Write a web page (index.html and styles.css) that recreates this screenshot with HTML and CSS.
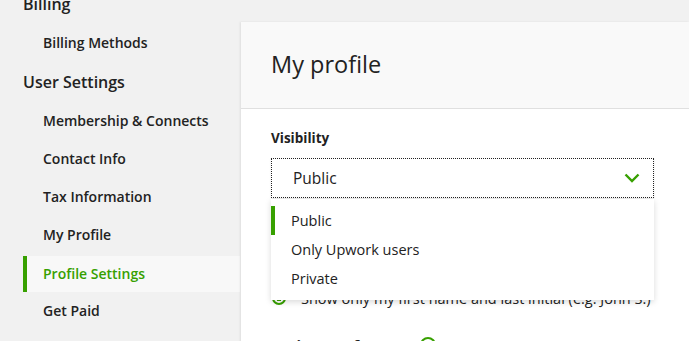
FILE: index.html
```html
<!DOCTYPE html>
<html lang="en">
<head>
  <meta charset="UTF-8" />
  <title>Profile Settings</title>
  <link rel="stylesheet" href="styles.css">
</head>
<body>
  <div class="layout">
    <nav class="sidebar">
      <div class="nav-heading">Billing</div>
      <a class="nav-item" href="#">Billing Methods</a>
      <div class="nav-heading">User Settings</div>
      <a class="nav-item" href="#">Membership &amp; Connects</a>
      <a class="nav-item" href="#">Contact Info</a>
      <a class="nav-item" href="#">Tax Information</a>
      <a class="nav-item" href="#">My Profile</a>
      <a class="nav-item active" href="#">Profile Settings</a>
      <a class="nav-item" href="#">Get Paid</a>
    </nav>

    <main class="card">
      <div class="card-header">
        <h1>My profile</h1>
      </div>
      <div class="card-body">
        <div class="field-label">Visibility</div>
        <div class="select-wrap">
          <div class="select">
            <span>Public</span>
            <svg class="chevron" width="16" height="10" viewBox="0 0 16 10">
              <path d="M1.5 1.5 L8 8 L14.5 1.5" fill="none" stroke="#37a000" stroke-width="2.4"/>
            </svg>
          </div>
          <ul class="dropdown">
            <li class="selected">Public</li>
            <li>Only Upwork users</li>
            <li>Private</li>
          </ul>
        </div>

        <label class="radio-row">
          <span class="radio checked"></span>
          Show only my first name and last initial (e.g. John S.)
        </label>

        <div class="section-title">
          Project preference
          <span class="help">?</span>
        </div>
      </div>
    </main>
  </div>
</body>
</html>
```

FILE: styles.css
```css
* {
  box-sizing: border-box;
  margin: 0;
  padding: 0;
}

body {
  background: #f1f1f1;
  font-family: 'Open Sans', sans-serif;
  color: #222;
  overflow: hidden;
  height: 341px;
}

.layout {
  display: flex;
  align-items: flex-start;
}

/* sidebar */
.sidebar {
  width: 240px;
  flex-shrink: 0;
  margin-top: -16px;
  display: flex;
  flex-direction: column;
}

.nav-heading {
  height: 40px;
  line-height: 40px;
  padding-left: 23px;
  font-size: 16px;
  font-weight: 600;
  color: #222;
}

.nav-item {
  height: 38px;
  line-height: 38px;
  padding-left: 43px;
  font-size: 14px;
  font-weight: 600;
  color: #222;
  text-decoration: none;
}

.nav-item.active {
  color: #37a000;
  background: #f8f8f8;
  border-left: 4px solid #37a000;
  margin-left: 23px;
  padding-left: 16px;
  margin-top: 2px;
  height: 36px;
  line-height: 36px;
}

/* main card */
.card {
  flex: 1;
  margin-top: 22px;
  margin-left: 1px;
  background: #fff;
  min-height: 400px;
  box-shadow: -1px 0 2px rgba(0, 0, 0, 0.08);
}

.card-header {
  height: 87px;
  background: #f9f9f9;
  border-bottom: 1px solid #e0e0e0;
  padding-left: 30px;
  display: flex;
  align-items: center;
}

.card-header h1 {
  font-size: 23.5px;
  font-weight: 400;
  color: #222;
  margin-top: -3px;
}

.card-body {
  padding: 20px 30px;
}

.field-label {
  font-size: 13.5px;
  font-weight: 700;
  line-height: 18px;
  margin-bottom: 11px;
}

.select-wrap {
  position: relative;
  width: 383px;
}

.select {
  height: 40px;
  border: 1px dotted #222;
  padding: 0 13px 0 21px;
  display: flex;
  align-items: center;
  justify-content: space-between;
  font-size: 15.5px;
  box-shadow: 0 1px 2px rgba(0, 0, 0, 0.1);
}

.dropdown {
  position: absolute;
  top: 41px;
  left: 0;
  right: 0;
  list-style: none;
  background: #fff;
  padding: 7px 0;
  box-shadow: 0 2px 6px rgba(0, 0, 0, 0.15);
  z-index: 2;
}

.dropdown li {
  height: 29px;
  line-height: 29px;
  padding-left: 20px;
  font-size: 14.5px;
  color: #222;
}

.dropdown li.selected {
  border-left: 4px solid #37a000;
  padding-left: 16px;
}

.radio-row {
  display: flex;
  align-items: center;
  gap: 15px;
  font-size: 14.5px;
  height: 30px;
  margin-top: 85px;
  margin-left: 1px;
}

.radio {
  width: 14px;
  height: 14px;
  border-radius: 50%;
  border: 2px solid #37a000;
  flex-shrink: 0;
}

.radio.checked {
  background: radial-gradient(#37a000 0 3px, #fff 3.5px);
}

.section-title {
  margin-top: 22px;
  font-size: 15px;
  font-weight: 700;
  display: flex;
  align-items: center;
  gap: 10px;
}

.help {
  width: 16px;
  height: 16px;
  border-radius: 50%;
  border: 2px solid #37a000;
  color: #37a000;
  font-size: 10px;
  line-height: 12px;
  text-align: center;
}
```
